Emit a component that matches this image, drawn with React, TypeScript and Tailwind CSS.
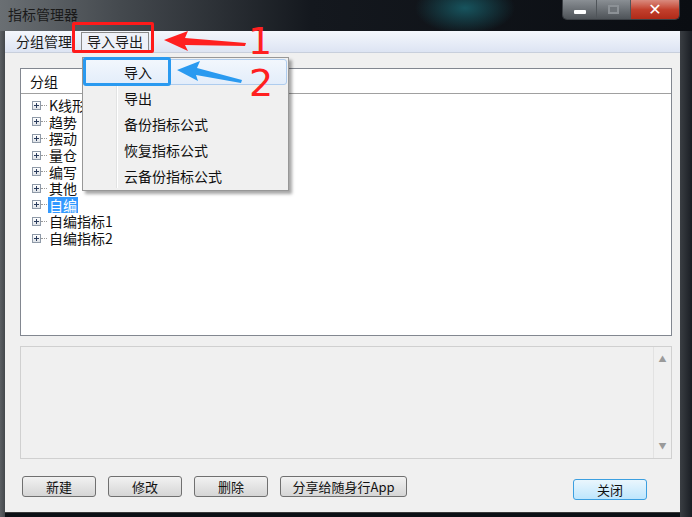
import React from "react";

const treeItems = ["K线形", "趋势", "摆动", "量仓", "编写", "其他", "自编", "自编指标1", "自编指标2"];
const menuItems = ["导入", "导出", "备份指标公式", "恢复指标公式", "云备份指标公式"];

function PlusBox() {
  return (
    <span className="relative flex h-[9px] w-[9px] items-center justify-center border border-[#8f9aa8] bg-gradient-to-b from-white to-[#dfe3e8]">
      <span className="absolute h-[1px] w-[5px] bg-[#2b3c5c]" />
      <span className="absolute h-[5px] w-[1px] bg-[#2b3c5c]" />
    </span>
  );
}

function Btn({ label, wide, primary }: { label: string; wide?: boolean; primary?: boolean }) {
  return (
    <button
      className={`block h-[21px] ${wide ? "w-[127px]" : "w-[74px]"} rounded-[3px] border ${
        primary ? "border-[#3c9fe0] from-[#eaf6fd] to-[#bee6fd]" : "border-[#707070] from-[#f2f2f2] to-[#d5d5d5]"
      } bg-gradient-to-b text-[13px] leading-none text-[#111]`}
    >
      {label}
    </button>
  );
}

export default function App() {
  return (
    <div
      className="relative h-[517px] w-[692px] overflow-hidden bg-[#0c1015]"
      style={{ fontFamily: '"Noto Sans CJK SC", "Noto Sans", sans-serif' }}
    >
      {/* title bar */}
      <div className="flex h-[31px] items-start justify-between bg-[radial-gradient(ellipse_50px_26px_at_465px_8px,#17545e,transparent),linear-gradient(90deg,#6a6f73_0%,#43484d_18%,#14181e_45%,#0a0d12_100%)] pr-[12px]">
        <div className="pl-[8px] pt-[4px] text-[14px] text-[#1a1a1a]">指标管理器</div>
        <div className="flex h-[20px] overflow-hidden rounded-b-[5px] border border-t-0 border-[#3b3f44]">
          <div className="flex w-[34px] items-center justify-center border-r border-[#50555a] bg-gradient-to-b from-[#8a8f94] to-[#4e5358]">
            <span className="mt-[5px] h-[4px] w-[12px] rounded-[1px] bg-white" />
          </div>
          <div className="flex w-[34px] items-center justify-center border-r border-[#50555a] bg-gradient-to-b from-[#8a8f94] to-[#4e5358]">
            <span className="h-[9px] w-[11px] border-2 border-[#8c9196] bg-[#6e7378]" />
          </div>
          <div className="flex w-[48px] items-center justify-center bg-gradient-to-b from-[#d98a7e] via-[#c2402d] to-[#b02a18]">
            <span className="text-[16px] font-bold leading-none text-white" style={{ fontFamily: '"DejaVu Sans", sans-serif' }}>
              ✕
            </span>
          </div>
        </div>
      </div>

      {/* window frame sides */}
      <div className="absolute left-0 top-[31px] h-[486px] w-[692px] bg-[linear-gradient(90deg,#5b5f63_0px,#44484c_5px,transparent_5px,transparent_680px,#3a3e43_680px,#1a1e24_692px)]" />
      <div className="relative ml-[5px] flex h-[482px] w-[675px] flex-col border-b border-[#3a3a3a] bg-[#f0f0f0]">
        {/* menu bar */}
        <div className="flex h-[22px] items-center border-b border-[#c8cfdc] bg-gradient-to-b from-[#f4f7fc] to-[#dde4f3] pl-[10px] text-[14px] text-[#1a1a1a]">
          <span className="px-[1px]">分组管理</span>
          <span className="ml-[8px] flex h-[20px] items-center border border-[#8a8a8a] bg-[#eef1f8] px-[5px]">导入导出</span>
        </div>

        {/* tree */}
        <div className="ml-[15px] mt-[15px] flex h-[268px] w-[652px] flex-col border border-[#828790] bg-white">
          <div className="flex h-[25px] items-center border-b border-[#a0a0a0] pl-[9px] text-[14px] text-[#111]">分组</div>
          <div className="flex flex-col pt-[3px]">
            {treeItems.map((t, i) => (
              <div key={t} className="flex h-[16.6px] items-center pl-[11px]">
                <PlusBox />
                <span className="w-[6px] border-t border-dotted border-[#9a9a9a]" />
                <span
                  className={`ml-[1px] px-[1px] text-[14px] leading-[16px] ${
                    i === 6 ? "bg-[#3399ff] text-white" : "text-[#111]"
                  }`}
                >
                  {t}
                </span>
              </div>
            ))}
          </div>
        </div>

        {/* description */}
        <div className="ml-[15px] mt-[10px] flex h-[113px] w-[652px] border border-[#d0d0d0] bg-[#f0f0f0]">
          <div className="flex-1" />
          <div className="flex w-[18px] flex-col items-center justify-between border-l border-[#e2e2e2] py-[8px] text-[8px] leading-none text-[#9a9a9a]">
            <span>▲</span>
            <span>▼</span>
          </div>
        </div>

        {/* buttons */}
        <div className="ml-[17px] mt-[17px] flex items-start gap-[12px]">
          <Btn label="新建" />
          <Btn label="修改" />
          <Btn label="删除" />
          <Btn label="分享给随身行App" wide />
          <div className="ml-[154px] mt-[3px] flex">
            <Btn label="关闭" primary />
          </div>
        </div>
      </div>

      {/* dropdown menu */}
      <div className="absolute left-[82px] top-[57px] h-[134px] w-[207px] border border-[#979797] bg-[#f0f0f0] p-[1px] shadow-[3px_3px_3px_rgba(0,0,0,0.35)]">
        <div className="absolute bottom-[2px] left-[33px] top-[2px] w-[2px] border-l border-[#e2e3e3] bg-white" />
        {menuItems.map((m, i) => (
          <div
            key={m}
            className={`relative flex h-[26px] items-center pl-[39px] text-[14px] leading-none text-[#111] ${
              i === 0 ? "rounded-[3px] border border-[#aeccee] bg-gradient-to-b from-[#f2f7fd] to-[#e3edfa]" : "border border-transparent"
            }`}
          >
            {m}
          </div>
        ))}
      </div>

      {/* annotations */}
      <div className="absolute left-[72px] top-[22px] h-[31px] w-[82px] rounded-[2px] border-[3px] border-[#ff1a1a]" />
      <div className="absolute left-[83px] top-[57px] h-[29px] w-[88px] rounded-[3px] border-[3px] border-[#2a9af0]" />
      <svg className="absolute left-0 top-0" width="692" height="517">
        <polygon points="164,40 188,31 185,38 246,43 245,46 185,45 188,51" fill="#ff2020" />
        <polygon points="177,70 200,61 197,68 242,80 241,83 196,75 198,81" fill="#2a9af0" />
      </svg>
      <div
        className="absolute left-[248px] top-[22px] text-[38px] leading-none text-[#ff2020]"
        style={{ fontFamily: '"DejaVu Sans", sans-serif' }}
      >
        1
      </div>
      <div
        className="absolute left-[249px] top-[64px] text-[38px] leading-none text-[#ff2020]"
        style={{ fontFamily: '"DejaVu Sans", sans-serif' }}
      >
        2
      </div>
    </div>
  );
}
